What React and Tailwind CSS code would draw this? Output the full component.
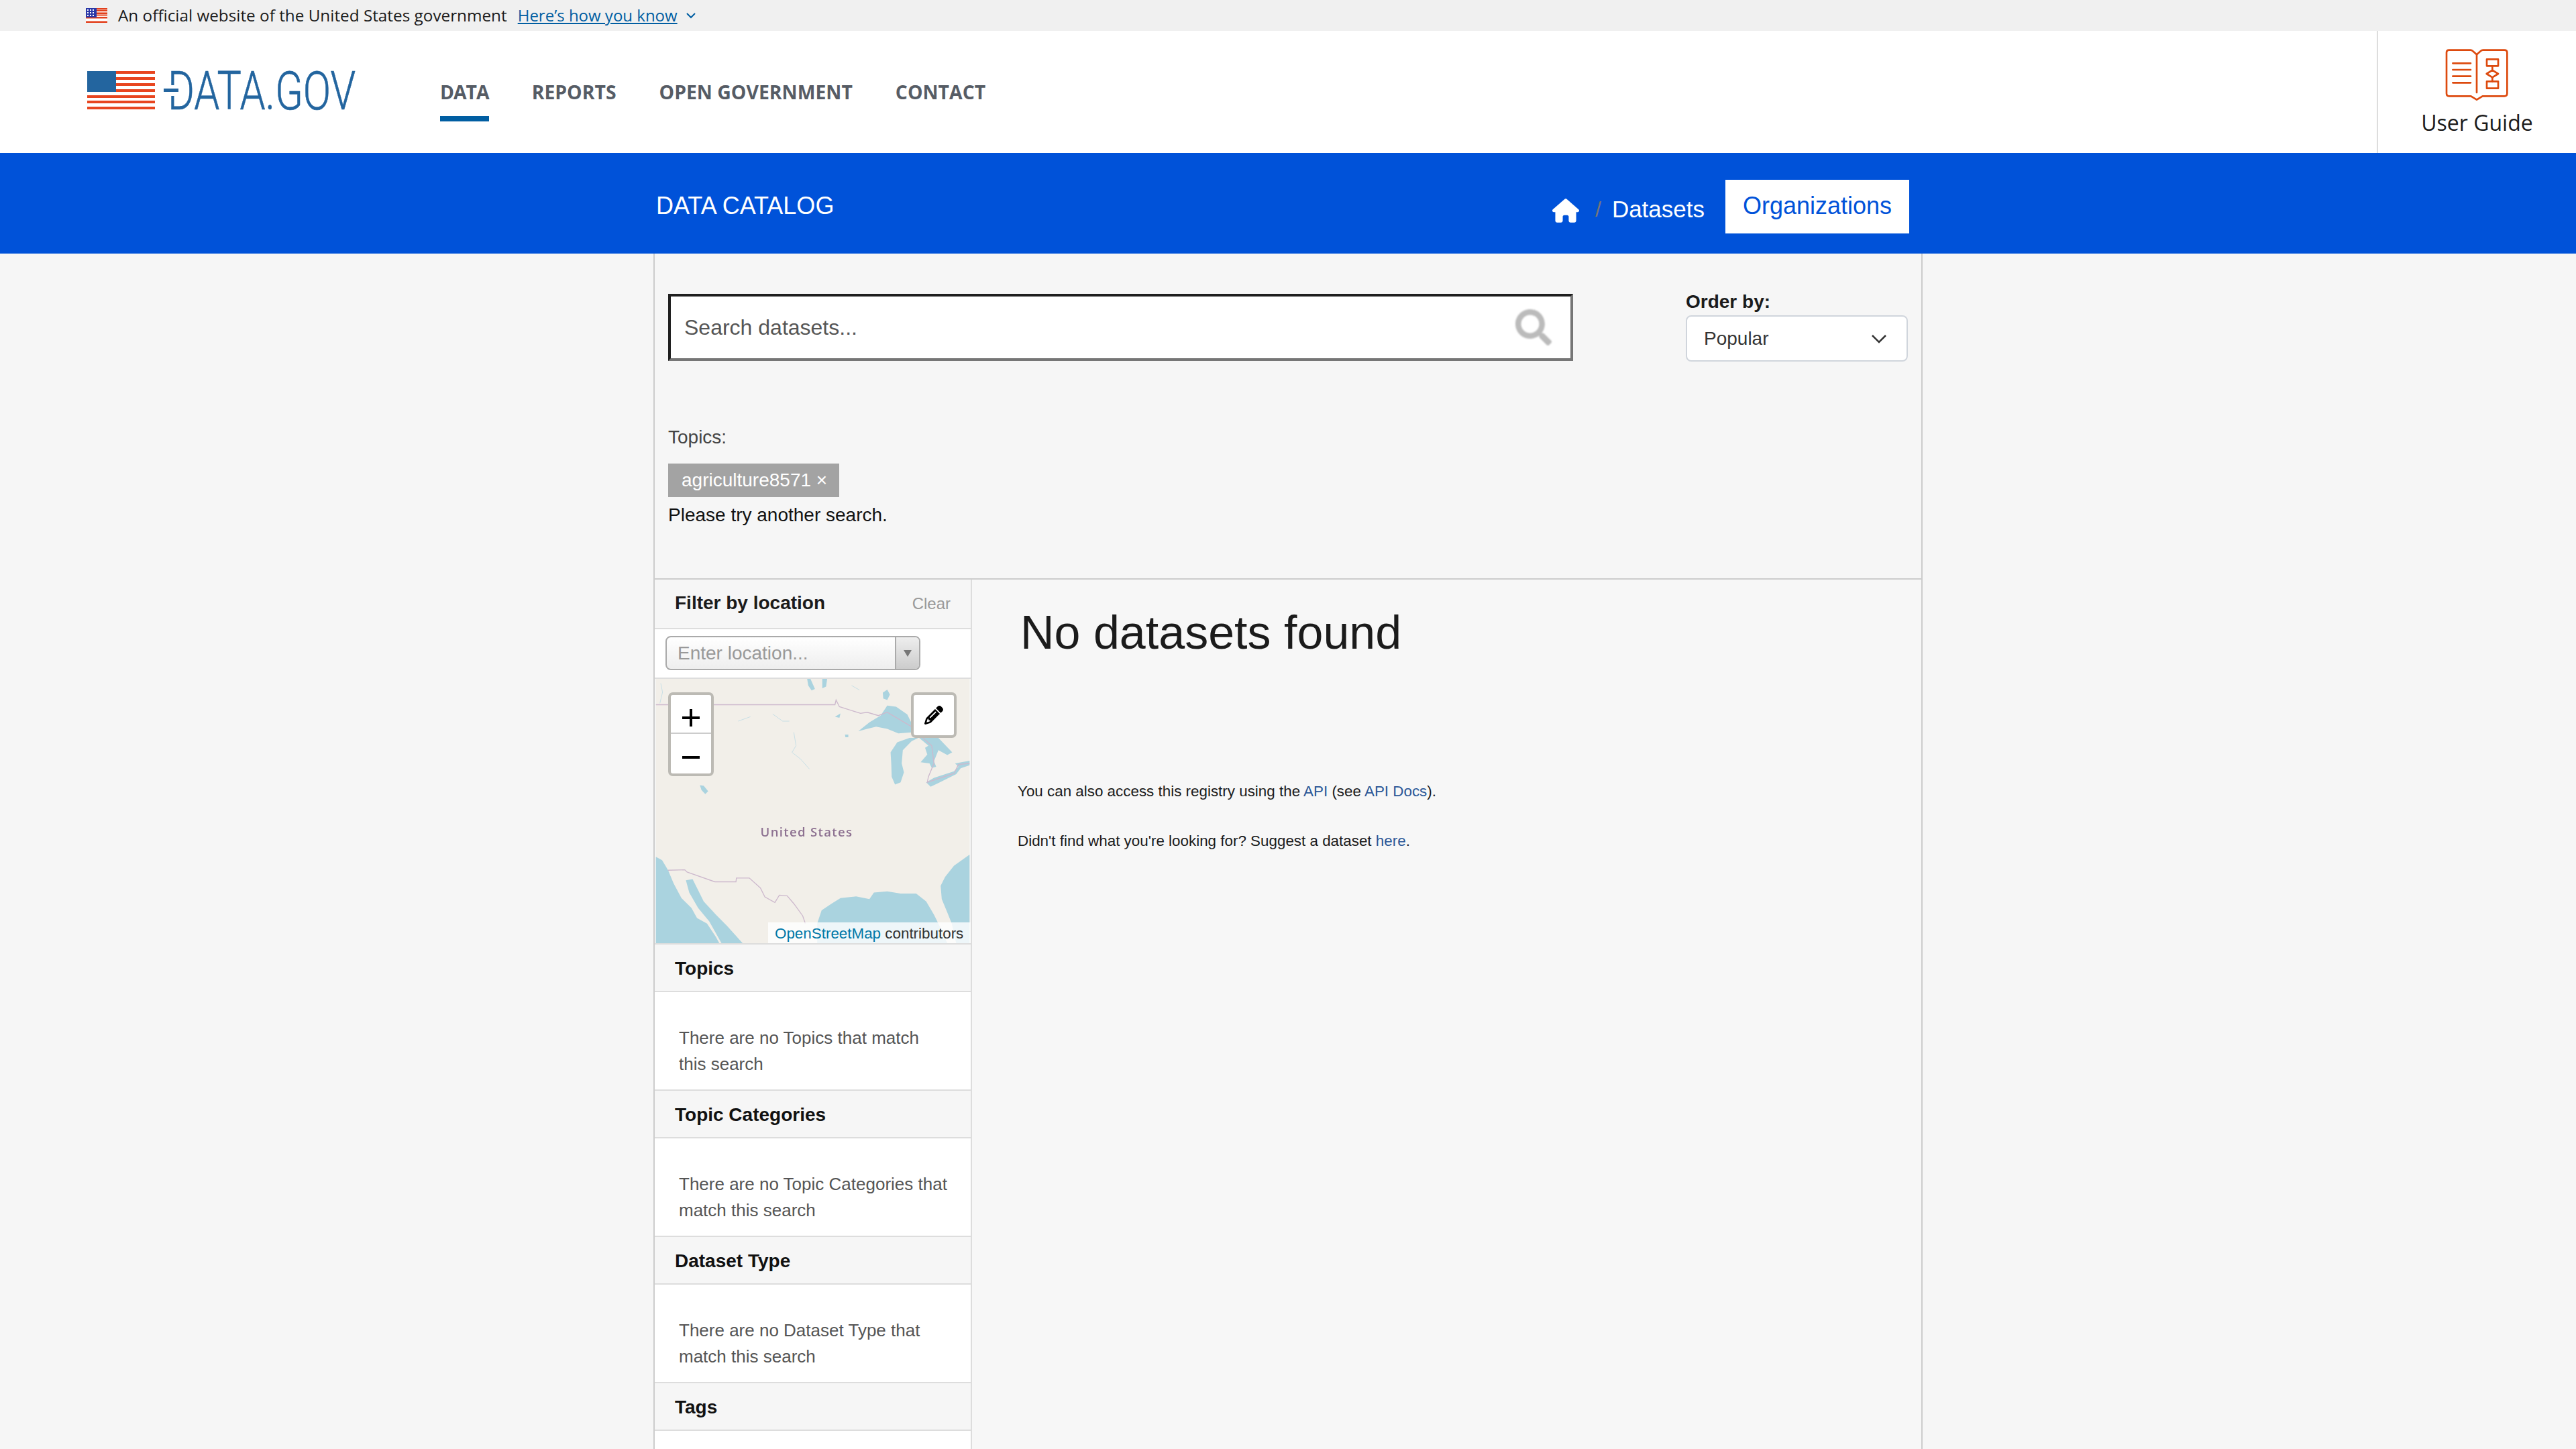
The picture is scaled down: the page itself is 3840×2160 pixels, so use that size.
import { FaSearch } from "react-icons/fa";
import { FaHouse, FaPencil } from "react-icons/fa6";

const FilterBlock = ({ title, lines }) => (
    <div>
        <div className="h-[71px] pl-[30px] pt-[20px] border-b-2 border-[#dddddd] text-[28px] leading-[32px] font-bold text-[#111111]">
            {title}
        </div>
        <div className="h-[147px] bg-white border-b-2 border-[#dddddd] pl-[36px] pt-[49px] text-[26px] leading-[39px] text-[#555555]">
            {lines[0]}
            <br />
            {lines[1]}
        </div>
    </div>
);

const SmallFlag = () => (
    <svg width="32" height="22" viewBox="0 0 32 22" className="shrink-0">
        <rect width="32" height="22" fill="white" />
        {[0, 6.5, 13, 19.5].map((y) => (
            <rect key={y} x="0" y={y} width="32" height="2.5" fill="#e2401c" />
        ))}
        <rect x="0" y="3" width="32" height="2" fill="#e2401c" />
        <rect x="0" y="9.5" width="32" height="2" fill="#e2401c" />
        <rect width="16" height="14" fill="#2a38a8" />
        {[2, 6, 10].map((x) =>
            [2, 6, 10].map((y) => <rect key={`${x}-${y}`} x={x} y={y} width="2" height="2" fill="white" />)
        )}
    </svg>
);

const Logo = () => (
    <svg width="402" height="100" viewBox="130 85 402 100" className="shrink-0 overflow-visible">
        <rect x="130" y="106" width="101" height="4" fill="#e8451f" />
        <rect x="130" y="115" width="101" height="4" fill="#e8451f" />
        <rect x="130" y="124" width="101" height="4" fill="#e8451f" />
        <rect x="130" y="133" width="101" height="4" fill="#e8451f" />
        <rect x="130" y="142" width="101" height="4" fill="#e8451f" />
        <rect x="130" y="150" width="101" height="4" fill="#e8451f" />
        <rect x="130" y="159" width="101" height="4" fill="#e8451f" />
        <rect x="130" y="106" width="43" height="31" fill="#23659f" />
        <text
            x="250"
            y="163"
            fontFamily="Roboto, sans-serif"
            fontWeight="300"
            fontSize="80"
            textLength="280"
            lengthAdjust="spacingAndGlyphs"
            fill="#23659f"
            stroke="#23659f"
            strokeWidth="0.6"
        >
            DATA.GOV
        </text>
        <rect x="248" y="127" width="12" height="16" fill="white" />
        <rect x="244" y="132" width="22" height="5" fill="#23659f" />
    </svg>
);

const GuideIcon = () => (
    <svg width="95" height="80" viewBox="735 120 285 240" fill="none" stroke="#dd4a0e" strokeWidth="8" strokeLinejoin="round" strokeLinecap="round">
        <path d="M876 148 L858 132 Q854 128 848 128 H752 Q741 128 741 139 V322 Q741 334 752 334 H850 L876 350 L902 334 H1000 Q1012 334 1012 322 V139 Q1012 128 1000 128 H904 Q898 128 894 132 Z" />
        <path d="M876 148 V318" />
        <path d="M769 187 H849 M769 216 H849 M769 245 H849 M769 274 H849" />
        <rect x="921" y="169" width="51" height="30" />
        <path d="M946 218 L972 234 L946 250 L920 234 Z" />
        <rect x="921" y="268" width="51" height="31" />
        <path d="M946 199 V218 M946 250 V268" />
    </svg>
);

const MapBackground = () => (
    <svg viewBox="0 0 1410 1188" className="w-full h-full blur-[0.5px]">
        <rect width="1410" height="1188" fill="#f2efe9" />
        <g fill="#aad3df">
            {/* Pacific and Gulf of California */}
            <path d="M0 800 L28 815 L55 860 L80 920 L115 985 L160 1030 L185 1075 L230 1100 L270 1160 L285 1188 H0 Z" />
            <path d="M135 905 L165 900 L190 950 L215 1000 L270 1060 L320 1110 L390 1188 H295 L240 1090 L190 1030 L150 960 Z" />
            {/* Gulf of Mexico and Atlantic */}
            <path d="M725 1188 V1100 L745 1040 L790 1010 L830 985 L900 978 L960 990 L980 960 L1040 955 L1100 965 L1170 965 L1215 1000 L1250 1060 L1275 1110 L1310 1188 Z" />
            <path d="M1410 790 L1340 840 L1300 890 L1280 930 L1285 990 L1310 1050 L1330 1100 L1350 1188 H1410 Z" />
            {/* Great Lakes */}
            <path d="M910 235 L960 195 L1010 165 L1040 120 L1080 125 L1130 160 L1155 210 L1160 240 L1090 245 L1040 225 L990 215 L950 225 Z" />
            <path d="M1055 330 L1085 285 L1140 265 L1180 265 L1150 280 L1110 320 L1105 380 L1115 420 L1100 465 L1075 475 L1060 440 L1058 380 Z" />
            <path d="M1180 262 L1270 265 L1332 330 L1310 342 L1270 320 L1250 370 L1260 395 L1240 400 L1230 380 L1190 375 L1220 340 L1210 310 L1225 300 Z" />
            <path d="M1215 465 L1250 445 L1340 415 L1360 395 L1345 380 L1410 368 V388 L1370 402 L1350 428 L1270 468 L1235 485 Z" />
            {/* Small lakes */}
            <path d="M680 0 H695 L715 45 L700 52 L685 30 Z" />
            <path d="M748 0 H770 L765 35 L748 42 Z" />
            <path d="M1020 62 L1040 48 L1052 70 L1040 95 L1022 88 Z" />
            <path d="M198 478 L215 480 L235 505 L222 518 L205 500 Z" />
            <path d="M805 170 L830 155 L825 175 Z" />
            <path d="M850 250 H865 V262 H852 Z" />
        </g>
        <g fill="none" stroke="#c8dfe6" strokeWidth="3">
            <path d="M620 240 L630 300 L612 330 L650 360 L690 405" />
            <path d="M525 158 L570 190 L600 190" />
            <path d="M370 190 L425 170" />
            <path d="M880 30 L915 50" />
            <path d="M22 20 L30 60 L18 110" />
        </g>
        <g fill="none" stroke="#cdb9cd" strokeWidth="4">
            <path d="M0 116 H805 L810 95 L825 125 L920 155 L950 150 L1000 165 L1040 150 L1150 215 L1200 265 L1240 300 L1250 380 L1225 440 L1220 465 L1340 425 L1360 385 L1410 380" />
            <path d="M55 860 L130 858 L140 868 L265 912 H360 L362 895 H420 L470 940 L490 980 L535 1005 L555 972 L590 975 L620 1010 L660 1065 L672 1100" />
        </g>
        <text x="470" y="710" fontFamily="'Open Sans', sans-serif" fontWeight="600" fontSize="56" letterSpacing="4" fill="#8d7191">
            United States
        </text>
    </svg>
);

const App = () => {
    return (
        <div className="h-[2160px] w-[3840px] overflow-hidden bg-[#f6f6f6] font-['Liberation_Sans',sans-serif]">
            {/* Gov banner */}
            <div className="h-[46px] bg-[#f0f0f0] pl-[128px] flex items-center font-['Open_Sans',sans-serif] text-[24px] text-[#1b1b1b]">
                <SmallFlag />
                <span className="ml-[16px] text-[24.3px]">An official website of the United States government</span>
                <a className="ml-[16px] text-[#005ea2] underline">Here’s how you know</a>
                <svg className="ml-[12px] w-[16px] h-[16px]" viewBox="0 0 16 16" fill="none" stroke="#005ea2" strokeWidth="2">
                    <path d="M2 5 L8 11 L14 5" />
                </svg>
            </div>

            {/* Site header */}
            <div className="h-[182px] bg-white flex items-stretch">
                <div className="flex-1 pl-[130px] flex items-center font-['Open_Sans',sans-serif]">
                    <div className="mb-[4px]">
                        <Logo />
                    </div>
                    <nav className="ml-[124px] flex gap-[64px] text-[28.4px] font-bold text-[#565c65]">
                        <a className="relative tracking-[-1px]">
                            DATA
                            <span className="absolute left-0 right-0 top-[57px] h-[8px] bg-[#005ea2]" />
                        </a>
                        <a>REPORTS</a>
                        <a>OPEN GOVERNMENT</a>
                        <a>CONTACT</a>
                    </nav>
                </div>
                <div className="w-[297px] border-l-2 border-[#dddddd] flex flex-col items-center pt-[26px] font-['Open_Sans',sans-serif]">
                    <GuideIcon />
                    <span className="mt-[9px] text-[32px] leading-[44px] text-[#1b1b1b]">User Guide</span>
                </div>
            </div>

            {/* Blue catalog bar */}
            <div className="h-[150px] bg-[#0052d9]">
                <div className="w-[1892px] h-full mx-auto pl-[4px] pr-[20px] flex items-center justify-between">
                    <div className="mt-[8px] text-[36px] text-white">DATA CATALOG</div>
                    <div className="flex items-center text-white">
                        <FaHouse className="w-[40px] h-[36px] mt-[21px]" />
                        <span className="ml-[24px] mr-[16px] mt-[18px] text-[#777777] text-[32px]">/</span>
                        <span className="mt-[18px] text-[35px]">Datasets</span>
                        <a className="ml-[31px] mt-[10px] w-[274px] h-[80px] bg-white text-[36px] text-[#0052d9] flex items-center justify-center pb-[2px]">
                            Organizations
                        </a>
                    </div>
                </div>
            </div>

            {/* Catalog body */}
            <div className="w-[1892px] mx-auto border-x-2 border-[#cccccc]">
                <div className="h-[486px] border-b-2 border-[#cccccc] pl-[20px]">
                    <div className="flex items-start pt-[58px]">
                        <div className="mt-[2px] w-[1349px] h-[100px] bg-white border-4 border-t-[#1f1f1f] border-l-[#1f1f1f] border-r-[#767676] border-b-[#767676] pl-[20px] pr-[28px] flex items-center justify-between">
                            <span className="text-[32px] text-[#555555]">Search datasets...</span>
                            <FaSearch className="w-[54px] h-[54px] text-[#bbbbbb] blur-[1px]" />
                        </div>
                        <div className="ml-[168px]">
                            <div className="mt-[-2px] text-[28px] leading-[32px] font-bold text-[#1b1b1b]">Order by:</div>
                            <div className="mt-[4px] w-[331px] h-[69px] bg-white border-2 border-[#d0d5dc] rounded-[8px] pl-[25px] pr-[30px] flex items-center justify-between">
                                <span className="text-[28px] text-[#333333]">Popular</span>
                                <svg width="22" height="14" viewBox="0 0 22 14" fill="none" stroke="#333333" strokeWidth="2.5">
                                    <path d="M1 2 L11 12 L21 2" />
                                </svg>
                            </div>
                        </div>
                    </div>
                    <div className="mt-[97px] text-[28px] leading-[32px] text-[#444444]">Topics:</div>
                    <div className="mt-[23px] w-[255px] h-[50px] bg-[#a3a3a3] text-white text-[28px] flex items-center pl-[20px]">
                        agriculture8571 ×
                    </div>
                    <div className="mt-[9px] text-[28px] leading-[36px] text-[#111111]">Please try another search.</div>
                </div>

                <div className="flex">
                    {/* Filter sidebar */}
                    <div className="w-[473px] border-r-2 border-[#dddddd] shrink-0">
                        <div className="h-[74px] pl-[30px] pr-[30px] pt-[19px] border-b-2 border-[#dddddd] flex justify-between items-start">
                            <span className="text-[28px] leading-[32px] font-bold text-[#1b1b1b]">Filter by location</span>
                            <span className="text-[24px] leading-[32px] text-[#999999] mt-[1px]">Clear</span>
                        </div>
                        <div className="h-[74px] bg-white border-b-2 border-[#dddddd] pl-[16px] pt-[10px]">
                            <div className="w-[380px] h-[51px] rounded-[8px] border-2 border-[#aaaaaa] bg-gradient-to-b from-white to-[#eeeeee] flex overflow-hidden">
                                <span className="flex-1 pl-[16px] text-[28px] leading-[48px] text-[#999999]">Enter location...</span>
                                <span className="w-[36px] border-l-2 border-[#aaaaaa] bg-gradient-to-b from-[#eeeeee] to-[#cccccc] flex items-center justify-center">
                                    <svg width="12" height="10" viewBox="0 0 12 10">
                                        <path d="M0 0 H12 L6 10 Z" fill="#777777" />
                                    </svg>
                                </span>
                            </div>
                        </div>
                        <div className="relative h-[396px] border-b-2 border-[#dddddd]">
                            <MapBackground />
                            <div className="absolute left-[20px] top-[20px] w-[68px] border-4 border-[#bcbab4] rounded-[7px] bg-white overflow-hidden">
                                <div className="h-[58px] pt-[12px] border-b-2 border-[#cccccc] flex items-center justify-center">
                                    <svg width="26" height="26" viewBox="0 0 26 26" fill="black">
                                        <rect x="0" y="11" width="26" height="4" />
                                        <rect x="11" y="0" width="4" height="26" />
                                    </svg>
                                </div>
                                <div className="h-[59px] pt-[11px] flex items-center justify-center">
                                    <svg width="26" height="4" viewBox="0 0 26 4" fill="black">
                                        <rect width="26" height="4" />
                                    </svg>
                                </div>
                            </div>
                            <div className="absolute left-[382px] top-[20px] w-[68px] h-[68px] border-4 border-[#bcbab4] rounded-[7px] bg-white flex items-center justify-center">
                                <FaPencil className="w-[28px] h-[28px] text-black" />
                            </div>
                            <div className="absolute right-0 bottom-0 w-[302px] h-[31px] bg-white/80 pl-[10px] text-[22.4px] leading-[34px] text-[#333333]">
                                <span className="text-[#0078a8]">OpenStreetMap</span> contributors
                            </div>
                        </div>
                        <FilterBlock title="Topics" lines={["There are no Topics that match", "this search"]} />
                        <FilterBlock title="Topic Categories" lines={["There are no Topic Categories that", "match this search"]} />
                        <FilterBlock title="Dataset Type" lines={["There are no Dataset Type that", "match this search"]} />
                        <FilterBlock title="Tags" lines={["", ""]} />
                    </div>

                    {/* Results */}
                    <div className="flex-1 pl-[68px] pt-[39px] bg-[#f7f7f7]">
                        <h1 className="pl-[4px] text-[70px] leading-[80px] text-[#1b1b1b]">No datasets found</h1>
                        <p className="mt-[182px] text-[22.4px] leading-[30px] text-[#1b1b1b]">
                            You can also access this registry using the <a className="text-[#2b5797]">API</a> (see{" "}
                            <a className="text-[#2b5797]">API Docs</a>).
                        </p>
                        <p className="mt-[44px] text-[22.4px] leading-[30px] text-[#1b1b1b]">
                            Didn't find what you're looking for? Suggest a dataset <a className="text-[#2b5797]">here</a>.
                        </p>
                    </div>
                </div>
            </div>
        </div>
    );
};

export default App;
